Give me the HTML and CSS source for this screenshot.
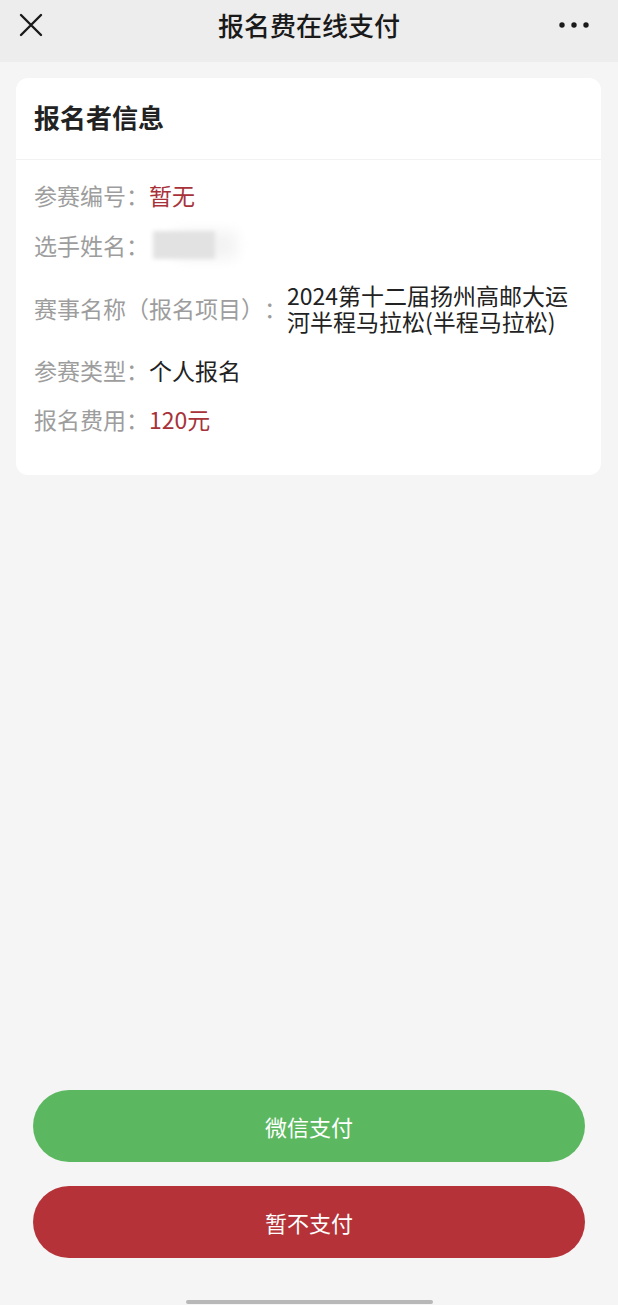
FILE: index.html
```html
<!DOCTYPE html>
<html lang="zh-CN">
<head>
    <meta charset="UTF-8">
    <meta name="viewport" content="width=device-width, initial-scale=1.0">
    <title>报名费在线支付</title>
    <link rel="stylesheet" href="styles.css">
</head>
<body>
    <div class="page">
        <!-- Top bar -->
        <header class="navBar">
            <svg class="navClose" width="24" height="24" viewBox="0 0 24 24">
                <path d="M2 2 L22 22 M22 2 L2 22" stroke="#1a1a1a" stroke-width="2.4" stroke-linecap="round" fill="none"/>
            </svg>
            <h1 class="navTitle">报名费在线支付</h1>
            <svg class="navMore" width="30" height="6" viewBox="0 0 30 6">
                <circle cx="3" cy="3" r="2.7" fill="#1a1a1a"/>
                <circle cx="15" cy="3" r="2.7" fill="#1a1a1a"/>
                <circle cx="27" cy="3" r="2.7" fill="#1a1a1a"/>
            </svg>
        </header>

        <!-- Applicant card -->
        <section class="infoCard">
            <h2 class="cardTitle">报名者信息</h2>
            <div class="cardBody">
                <div class="infoRow">
                    <span class="infoLabel">参赛编号：</span>
                    <span class="infoValue red">暂无</span>
                </div>
                <div class="infoRow">
                    <span class="infoLabel">选手姓名：</span>
                    <span class="nameMask"></span>
                </div>
                <div class="infoRow">
                    <span class="infoLabel">赛事名称（报名项目）：</span>
                    <span class="infoValue">2024第十二届扬州高邮大运河半程马拉松(半程马拉松)</span>
                </div>
                <div class="infoRow">
                    <span class="infoLabel">参赛类型：</span>
                    <span class="infoValue">个人报名</span>
                </div>
                <div class="infoRow">
                    <span class="infoLabel">报名费用：</span>
                    <span class="infoValue red">120元</span>
                </div>
            </div>
        </section>

        <div class="spacer"></div>

        <!-- Pay buttons -->
        <div class="actions">
            <button class="payButton green">微信支付</button>
            <button class="payButton red">暂不支付</button>
        </div>

        <div class="homeBar"><span></span></div>
    </div>
</body>
</html>
```

FILE: styles.css
```css
* {
    margin: 0;
    padding: 0;
    box-sizing: border-box;
    font-family: "Noto Sans CJK SC", "Noto Sans", sans-serif;
    text-spacing-trim: space-all;
}

body {
    background-color: #f5f5f5;
}

.page {
    height: 1305px;
    display: flex;
    flex-direction: column;
}

.navBar {
    height: 62px;
    background-color: #ededed;
    display: flex;
    align-items: center;
    justify-content: space-between;
    padding: 0 29px 13px 19px;
}

.navClose {
    display: block;
}

.navTitle {
    font-size: 26px;
    font-weight: 500;
    color: #1a1a1a;
    margin-left: 16px;
}

.navMore {
    display: block;
}

.infoCard {
    margin: 16px 17px 0 16px;
    background-color: #fff;
    border-radius: 12px;
}

.cardTitle {
    font-size: 26px;
    font-weight: 700;
    color: #222;
    line-height: 36px;
    padding: 21px 18px 24px;
    border-bottom: 1px solid #f2f2f2;
}

.cardBody {
    padding: 22px 18px 20px;
}

.infoRow {
    display: flex;
    align-items: center;
    font-size: 23px;
    line-height: 26px;
    margin-bottom: 23px;
}

.infoLabel {
    color: #9d9d9d;
    flex-shrink: 0;
}

.infoValue {
    color: #222;
}

.infoValue.red {
    color: #a8323a;
}

.nameMask {
    display: inline-block;
    width: 62px;
    height: 28px;
    margin-left: 4px;
    background-color: #e2e2e2;
    filter: blur(2px);
    box-shadow: 22px 0 14px #f3f3f3;
}

.spacer {
    flex: 1;
}

.actions {
    display: flex;
    flex-direction: column;
    gap: 24px;
    padding: 0 33px;
}

.payButton {
    height: 72px;
    border: none;
    border-radius: 36px;
    color: #fff;
    font-size: 22px;
}

.payButton.green {
    background-color: #5cb860;
}

.payButton.red {
    background-color: #b53338;
}

.homeBar {
    display: flex;
    justify-content: center;
    padding: 42px 0 1px;
}

.homeBar span {
    width: 247px;
    height: 4px;
    border-radius: 2px;
    background-color: #b8b8b8;
}
```
